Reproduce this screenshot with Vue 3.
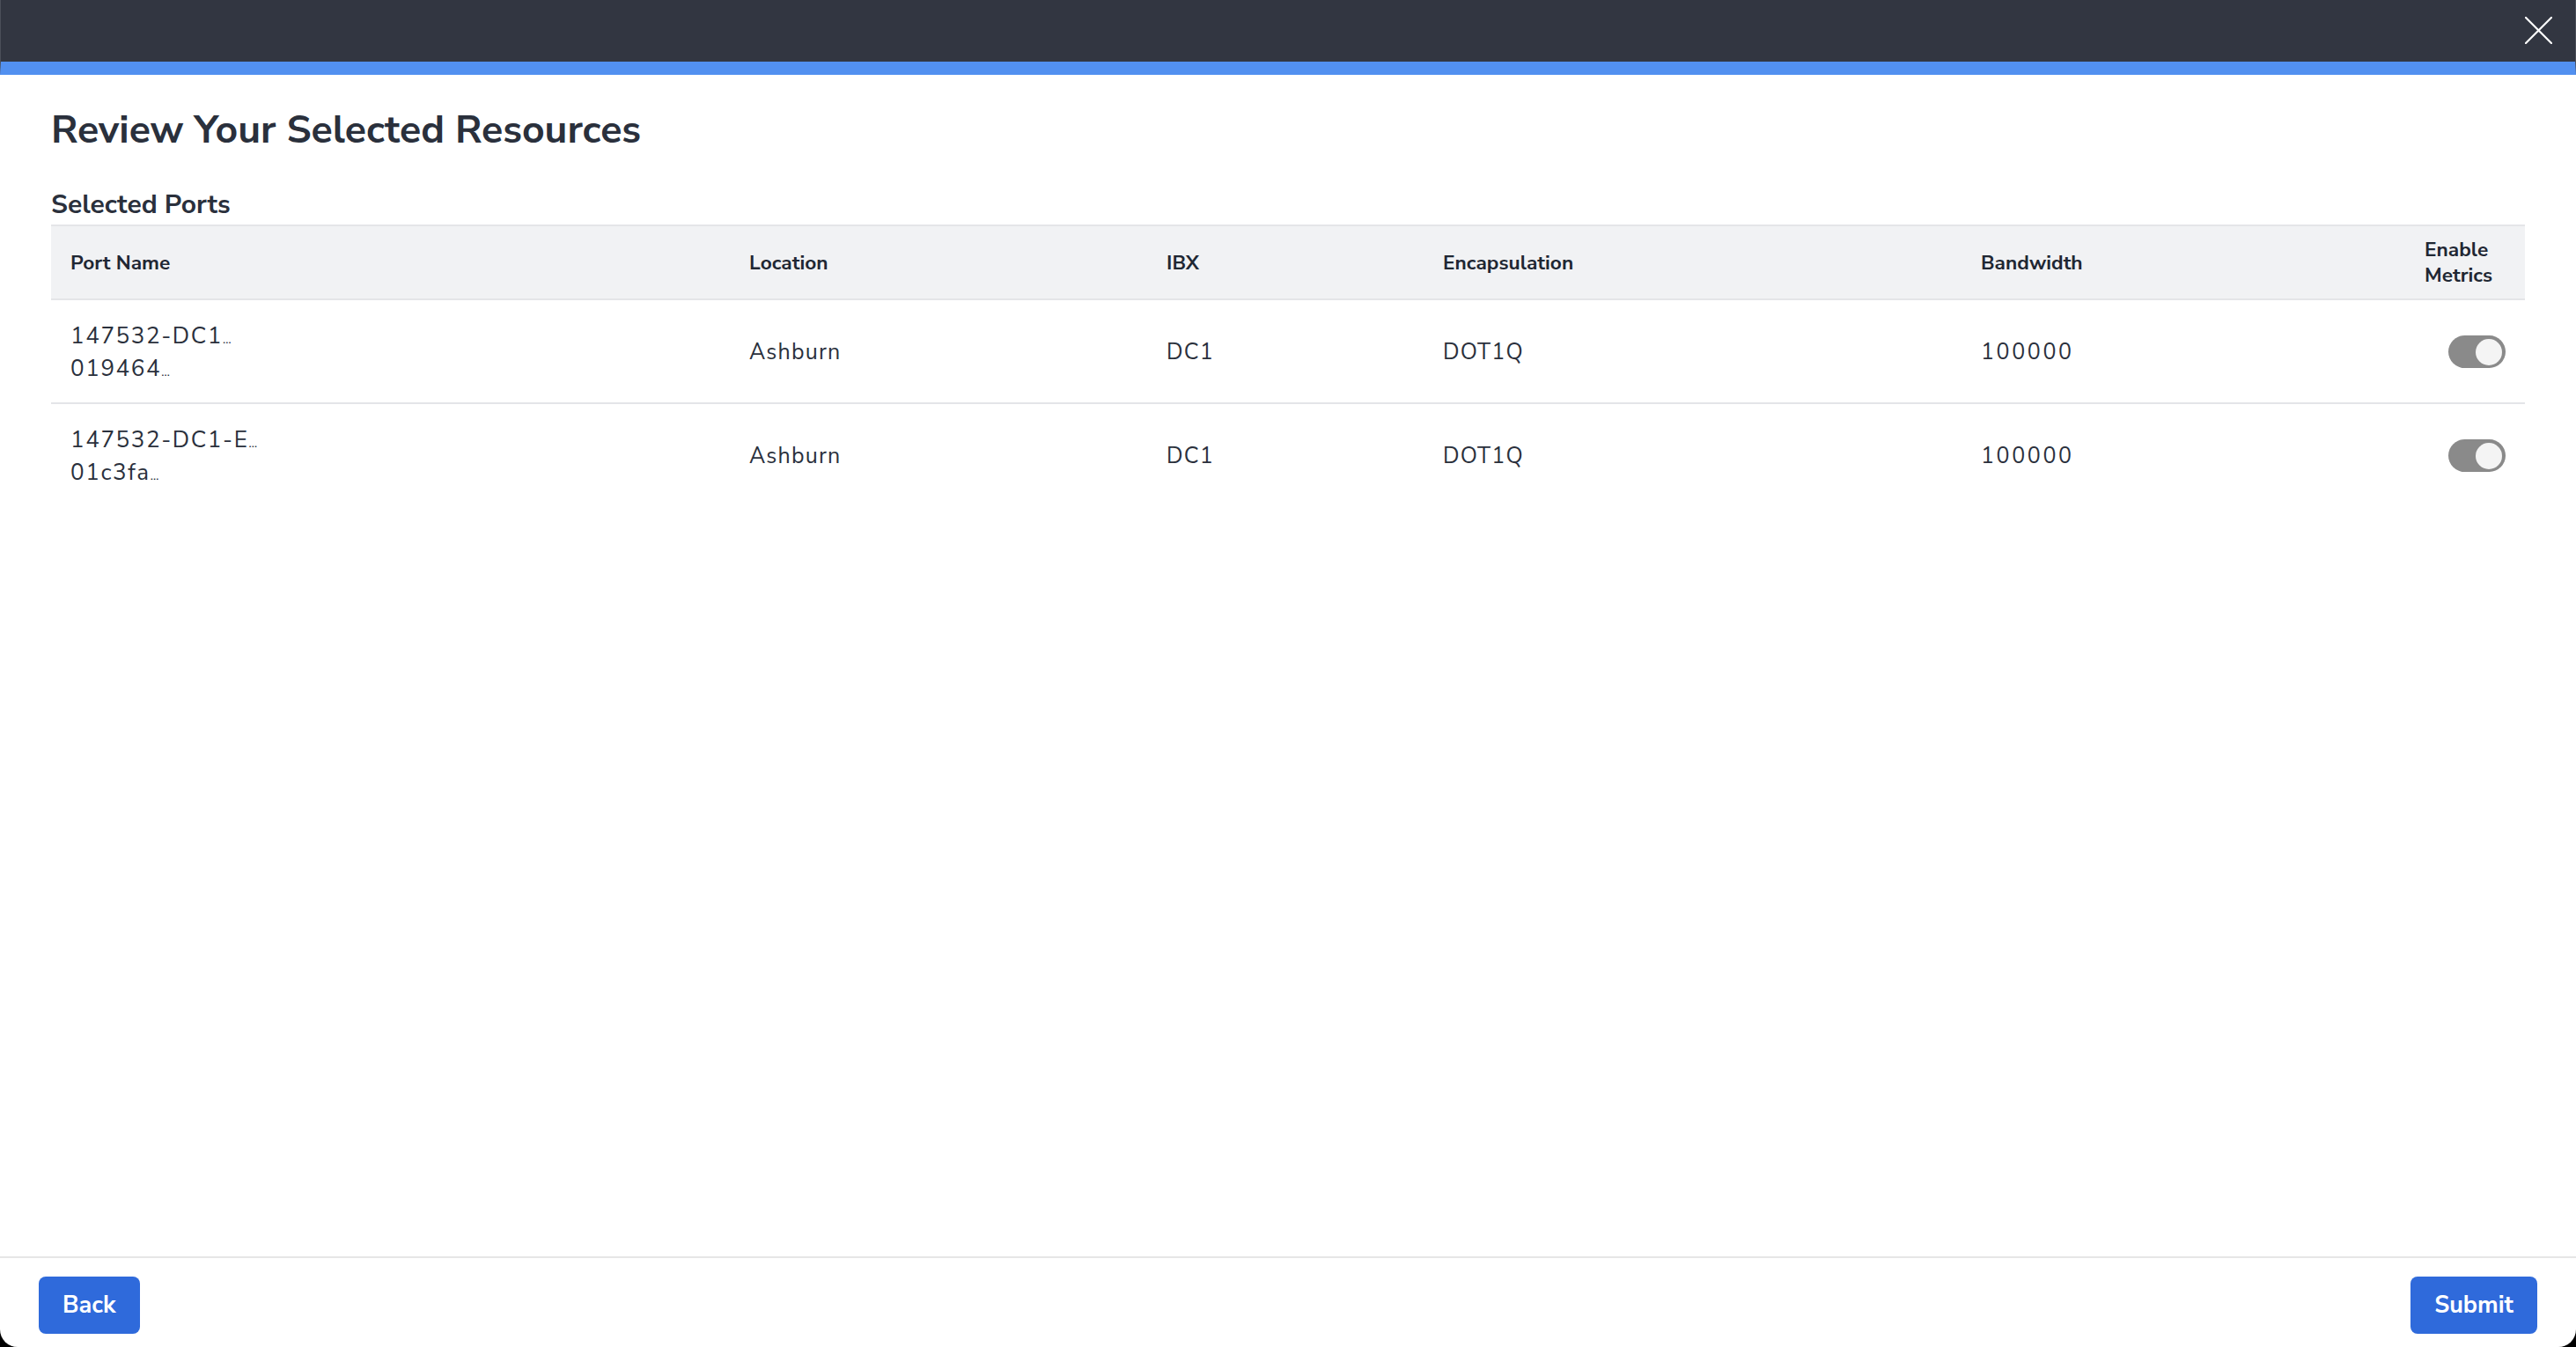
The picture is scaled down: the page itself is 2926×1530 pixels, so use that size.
<script setup>
const columns = [
  { key: 'name', label: 'Port Name' },
  { key: 'location', label: 'Location' },
  { key: 'ibx', label: 'IBX' },
  { key: 'encapsulation', label: 'Encapsulation' },
  { key: 'bandwidth', label: 'Bandwidth' }
]

const ports = [
  { id: 1, name: ['147532-DC1', '019464'], location: 'Ashburn', ibx: 'DC1', encapsulation: 'DOT1Q', bandwidth: '100000' },
  { id: 2, name: ['147532-DC1-E', '01c3fa'], location: 'Ashburn', ibx: 'DC1', encapsulation: 'DOT1Q', bandwidth: '100000' }
]
</script>

<template>
  <div class="modal">
    <header class="top-bar">
      <button class="close-button" aria-label="Close">
        <svg viewBox="0 0 31 31" width="31" height="31">
          <path d="M1 1 L30 30 M30 1 L1 30" stroke="#fff" stroke-width="2.2" fill="none" stroke-linecap="round" />
        </svg>
      </button>
    </header>

    <main class="content">
      <h1>Review Your Selected Resources</h1>
      <h2>Selected Ports</h2>

      <table>
        <colgroup>
          <col class="col-name" />
          <col class="col-location" />
          <col class="col-ibx" />
          <col class="col-encapsulation" />
          <col class="col-bandwidth" />
          <col class="col-metrics" />
        </colgroup>
        <thead>
          <tr>
            <th v-for="column in columns" :key="column.key">{{ column.label }}</th>
            <th class="metrics-head">Enable<br />Metrics</th>
          </tr>
        </thead>
        <tbody>
          <tr v-for="port in ports" :key="port.id">
            <td class="name-cell">
              <div v-for="line in port.name" :key="line">{{ line }}<span class="dots">…</span></div>
            </td>
            <td>{{ port.location }}</td>
            <td>{{ port.ibx }}</td>
            <td>{{ port.encapsulation }}</td>
            <td class="bandwidth-cell">{{ port.bandwidth }}</td>
            <td class="metrics-cell">
              <span class="toggle"><span class="knob"></span></span>
            </td>
          </tr>
        </tbody>
      </table>
    </main>

    <footer class="footer">
      <button class="action">Back</button>
      <button class="action">Submit</button>
    </footer>
  </div>
</template>

<style>
html, body {
  margin: 0;
  background: #000;
}
</style>

<style scoped>
.modal {
  width: 2926px;
  height: 1530px;
  display: flex;
  flex-direction: column;
  background: #fff;
  border-radius: 0 0 20px 20px;
  overflow: hidden;
  font-family: "Nunito Sans", Lato, sans-serif;
  color: #1f2733;
}

.top-bar {
  height: 70px;
  flex: none;
  display: flex;
  justify-content: flex-end;
  align-items: flex-start;
  background: #323641;
  border-left: 1px solid #4b4e58;
  border-right: 1px solid #4b4e58;
  border-bottom: 15px solid #5290f0;
}

.close-button {
  background: none;
  border: 0;
  padding: 0;
  margin: 19px 26px 0 0;
  height: 31px;
}

.content {
  flex: 1;
  padding: 0 58px;
}

h1 {
  margin: 28px 0 0;
  font-size: 44.6px;
  line-height: 70px;
  font-weight: 700;
  color: #2a303c;
}

h2 {
  margin: 30px 0 0;
  font-size: 30px;
  line-height: 40px;
  font-weight: 700;
  color: #2a303c;
}

table {
  width: 2810px;
  margin-top: 2px;
  border-collapse: collapse;
  table-layout: fixed;
}

.col-name { width: 771px; }
.col-location { width: 474px; }
.col-ibx { width: 314px; }
.col-encapsulation { width: 611px; }
.col-bandwidth { width: 506px; }
.col-metrics { width: 134px; }

th {
  height: 82px;
  padding: 0 22px;
  background: #f1f2f4;
  border-top: 2px solid #e4e5e8;
  border-bottom: 2px solid #e4e5e8;
  font-size: 22.7px;
  line-height: 29px;
  font-weight: 700;
  text-align: left;
  color: #1f2733;
}

td {
  height: 114px;
  padding: 2px 22px 0;
  font-size: 25px;
  line-height: 37px;
  letter-spacing: 1.2px;
  color: #2a303c;
}

tbody tr + tr td {
  border-top: 2px solid #e4e5e8;
}

.name-cell {
  font-size: 26px;
  letter-spacing: 1.6px;
}

.dots {
  font-size: 14px;
  line-height: 0;
  letter-spacing: 0;
}

.bandwidth-cell {
  letter-spacing: 2.6px;
}

th.metrics-head {
  padding: 0 0 0 20px;
}

.metrics-cell {
  padding: 0 22px 0 0;
  text-align: right;
}

.toggle {
  display: inline-flex;
  justify-content: flex-end;
  align-items: center;
  vertical-align: middle;
  width: 65px;
  height: 37px;
  padding-right: 4px;
  box-sizing: border-box;
  border-radius: 19px;
  background: #8a8a8a;
}

.knob {
  width: 30px;
  height: 30px;
  border-radius: 50%;
  background: #f4f4f4;
}

.footer {
  height: 103px;
  flex: none;
  box-sizing: border-box;
  display: flex;
  justify-content: space-between;
  padding: 21px 44px 0;
  border-top: 2px solid #e6e6e6;
}

.action {
  height: 65px;
  padding: 0 27px;
  background: #2f6adb;
  border: 0;
  border-radius: 8px;
  color: #fff;
  font-family: inherit;
  font-size: 27px;
  font-weight: 700;
}
</style>
